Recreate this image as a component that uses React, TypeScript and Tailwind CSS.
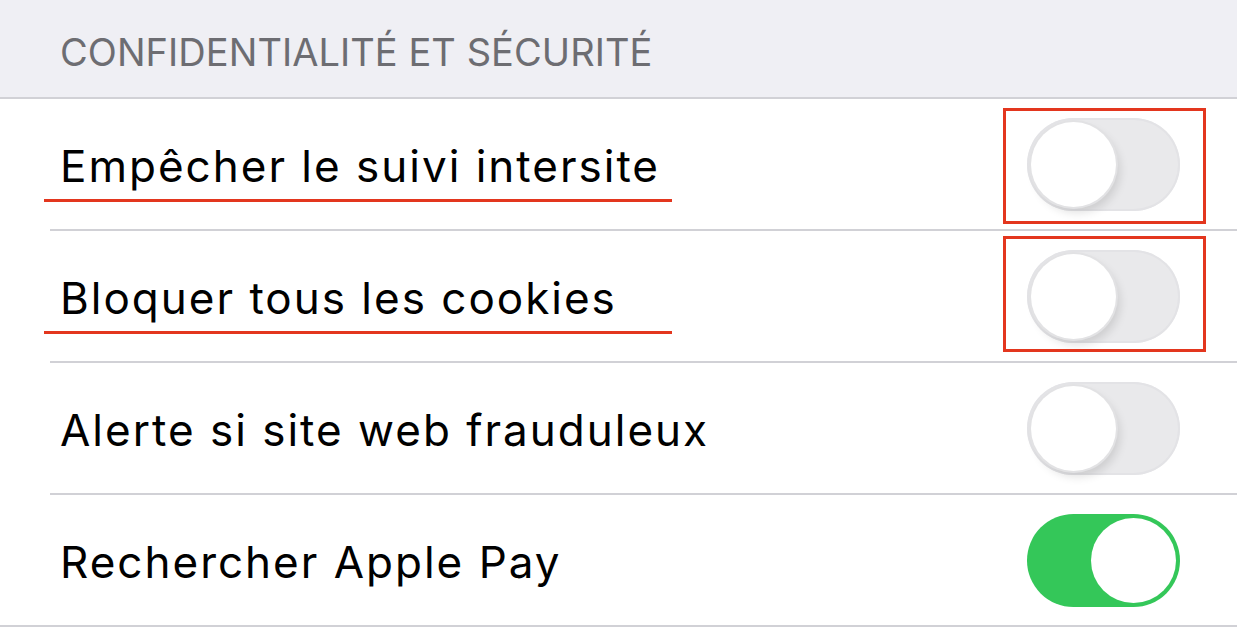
import React from 'react';

type Row = { label: string; on: boolean; box?: string };

const rows: Row[] = [
  { label: 'Empêcher le suivi intersite', on: false, box: '-top-[10px] -bottom-[13px]' },
  { label: 'Bloquer tous les cookies', on: false, box: '-top-[14px] -bottom-[9px]' },
  { label: 'Alerte si site web frauduleux', on: false },
  { label: 'Rechercher Apple Pay', on: true },
];

function Toggle({ on }: { on: boolean }) {
  return (
    <div
      className={`relative w-[153px] h-[93px] rounded-full ${
        on ? 'bg-[#34c759]' : 'bg-[#e9e9eb] shadow-[inset_0_0_0_2px_#e3e3e6]'
      }`}
    >
      <div
        className={`absolute top-[4px] w-[85px] h-[85px] rounded-full bg-white ${
          on
            ? 'left-[64px]'
            : 'left-[4px] shadow-[0_0_0_2px_#e2e2e4,4px_6px_10px_rgba(0,0,0,0.12)]'
        }`}
      />
    </div>
  );
}

export default function App() {
  return (
    <div className="w-[1237px] h-[627px] bg-white overflow-hidden font-['Inter',sans-serif]">
      <header className="h-[99px] bg-[#efeff4] border-b-2 border-[#d1d1d6] flex items-center pl-[60px] pt-[8px]">
        <h2 className="text-[38px] tracking-[0.05px] text-[#6d6d72] font-normal uppercase">
          Confidentialité et sécurité
        </h2>
      </header>
      <ul>
        {rows.map((r, i) => (
          <li key={r.label} className={i === rows.length - 1 ? '' : 'pl-[50px]'}>
            <div
              className={`h-[132px] border-b-2 border-[#d1d1d6] flex items-center justify-between pr-[57px] ${
                i === rows.length - 1 ? 'pl-[60px]' : 'pl-[10px]'
              }`}
            >
              <span className="relative text-[44px] text-black tracking-[2px] pt-[4px]">
                {r.label}
                {r.box && (
                  <span className="absolute left-[-16px] w-[628px] top-[70px] h-[3px] bg-[#e3361e]" />
                )}
              </span>
              <div className="relative">
                <Toggle on={r.on} />
                {r.box && (
                  <span className={`absolute -left-[24px] -right-[26px] border-[3px] border-[#e3361e] ${r.box}`} />
                )}
              </div>
            </div>
          </li>
        ))}
      </ul>
    </div>
  );
}
